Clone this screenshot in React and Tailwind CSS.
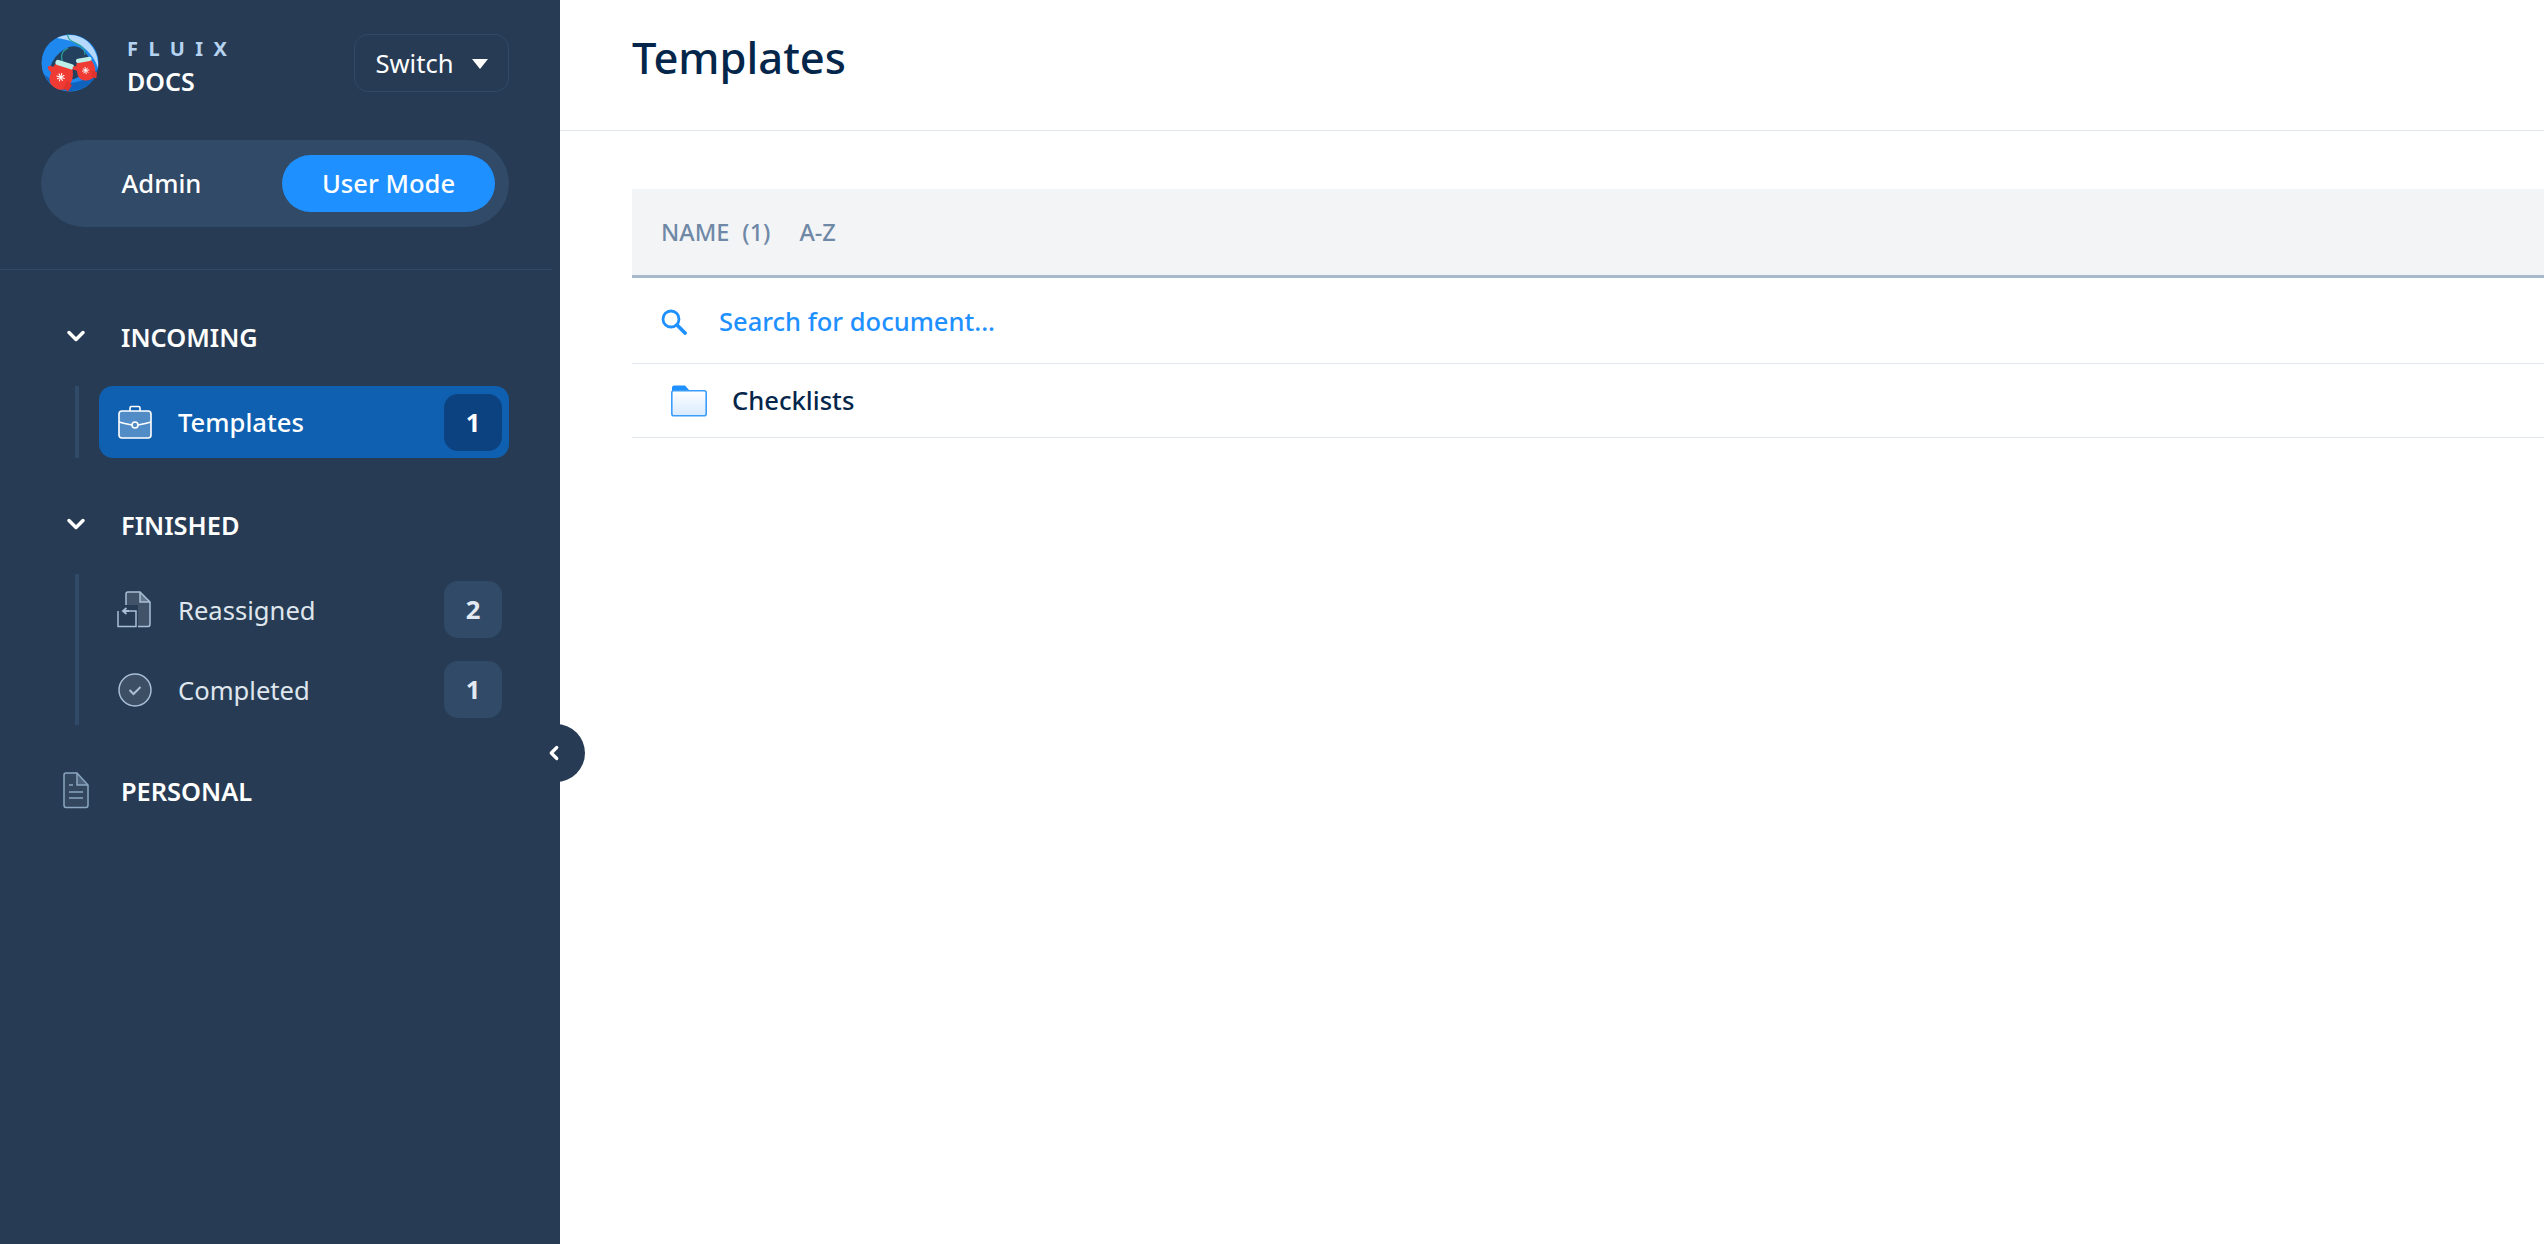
import React from 'react';
import { ChevronDown, ChevronLeft } from 'lucide-react';

const Mitten = ({ transform }) => (
  <g transform={transform}>
    <path d="M-10 -8 L10 -8 C13 -2 14 3 13 8 C12 15 8 19 1 19 C-7 19 -12 14 -12 7 L-12 3 L-16 1 C-19 -2 -16 -5 -12 -3 Z" fill="#ef3b33" />
    <path d="M8 6 L15 10 L13 18 L7 16 Z" fill="#e2322c" />
    <rect x="-11" y="-13" width="22" height="6" rx="3" fill="#bdeee8" />
    <g stroke="#fff" strokeWidth="1.2" strokeLinecap="round" transform="translate(0 5)">
      <path d="M-4.5 0 H4.5" />
      <path d="M0 -4.5 V4.5" />
      <path d="M-3 -3 L3 3" />
      <path d="M3 -3 L-3 3" />
    </g>
  </g>
);

const Logo = () => (
  <svg width="58" height="58" viewBox="0 0 58 58" className="shrink-0">
    <circle cx="29" cy="29" r="28.5" fill="#1e88ee" />
    <path d="M16 4 C24 0 36 -1 46 7 C54 14 58 24 57 34 C54 24 46 14 35 9 C28 6 22 5 16 4 Z" fill="#b5d8fb" />
    <path d="M3 40 C10 55 26 60 40 55 C50 51 55 44 57 34 C50 44 38 49 27 49 C17 49 9 46 3 40 Z" fill="#0f62bd" />
    <path d="M9 36 C10 26 18 17 28 13 C38 10 47 18 50 30 C44 40 36 46 26 46 C17 45 11 42 9 36 Z" fill="#24405f" />
    <path d="M27 0 C25 7 37 9 41 13 C43 15 44 17 44 21" fill="none" stroke="#2aa198" strokeWidth="1.2" />
    <path d="M27 14 C21 17 19 22 22 29" fill="none" stroke="#2aa198" strokeWidth="1.2" />
    <Mitten transform="translate(21 39) rotate(18) scale(0.88)" />
    <Mitten transform="translate(44 33) rotate(-10) scale(0.72)" />
  </svg>
);

const BriefcaseIcon = () => (
  <svg width="34" height="34" viewBox="0 0 34 34" fill="none" stroke="#fff" strokeWidth="1.6">
    <path d="M12 6 V3 C12 2 12.5 1.5 13.5 1.5 H20.5 C21.5 1.5 22 2 22 3 V6" />
    <rect x="1" y="6" width="32" height="27" rx="3" fill="#ffffff" fillOpacity="0.28" />
    <path d="M1 17 C7 19 11 19.5 14 20" />
    <path d="M33 17 C27 19 23 19.5 20 20" />
    <circle cx="17" cy="20" r="3" />
  </svg>
);

const ReassignedIcon = () => (
  <svg width="34" height="37" viewBox="0 0 34 37" fill="none" stroke="#a9bfd6" strokeWidth="1.5" className="-translate-x-[1px]">
    <path d="M9 14 V3 C9 2 10 1 11 1 H23 L33 11 V33 C33 34.5 32 35.5 31 35.5 H21 V14 Z" fill="#ffffff" fillOpacity="0.12" stroke="none" />
    <path d="M9 14 V3 C9 2 10 1 11 1 H23 L33 11 V33 C33 34.5 32 35.5 31 35.5 H21" />
    <path d="M23 1 V11 H33" fill="#a9bfd6" fillOpacity="0.35" />
    <path d="M1 20 V35.5 H19 V20 H8" />
    <path d="M12 20 H7 M9.5 17 L6 20 L9.5 23" strokeWidth="1.8" />
  </svg>
);

const CompletedIcon = () => (
  <svg width="34" height="34" viewBox="0 0 34 34" fill="none" stroke="#a9bfd6" strokeWidth="1.5">
    <circle cx="17" cy="17" r="16" fill="#ffffff" fillOpacity="0.1" />
    <path d="M11.5 17 L15.5 21 L22.5 14" strokeWidth="2" />
  </svg>
);

const PersonalIcon = () => (
  <svg width="26" height="37" viewBox="0 0 26 37" fill="none" stroke="#8ba6c1" strokeWidth="1.5" className="shrink-0">
    <path d="M3 1 H14 L25 13 V33 C25 34.5 24 35.5 23 35.5 H3 C2 35.5 1 34.5 1 33 V3 C1 2 2 1 3 1 Z" fill="#ffffff" fillOpacity="0.06" />
    <path d="M14 1 V13 H25" fill="#8ba6c1" fillOpacity="0.3" />
    <path d="M6 13 H10 M6 20 H20 M6 26 H20" />
  </svg>
);

const FolderIcon = () => (
  <svg width="36" height="32" viewBox="0 0 36 32">
    <defs>
      <linearGradient id="folderFill" x1="0" y1="0" x2="0" y2="1">
        <stop offset="0" stopColor="#ffffff" />
        <stop offset="1" stopColor="#d8eaff" />
      </linearGradient>
    </defs>
    <path d="M1 7 V2.5 C1 1.5 2 0.5 3 0.5 H14 L18 5 H34 V8 H1 Z" fill="#1e90ff" />
    <rect x="0.8" y="5.8" width="34.4" height="25" rx="2" fill="url(#folderFill)" stroke="#3b9dfb" strokeWidth="1.6" />
  </svg>
);

const SearchIcon = () => (
  <svg width="26" height="26" viewBox="0 0 26 26" fill="none" stroke="#1e90ff">
    <circle cx="10" cy="10" r="8" strokeWidth="2.8" />
    <path d="M16 16 L24 24" strokeWidth="3.8" strokeLinecap="round" />
  </svg>
);

const SectionHead = ({ label }) => (
  <div className="flex h-[40px] items-center">
    <ChevronDown className="ml-[62px] h-[28px] w-[28px] text-white" strokeWidth={3} />
    <span className="ml-[31px] pt-[2px] text-[25.4px] font-semibold text-white">{label}</span>
  </div>
);

const NavRow = ({ icon, label, count, active }) => (
  <div className={`flex items-center rounded-[14px] pl-[19px] pr-[7px] ${active ? 'h-[72px] bg-[#0f60b0]' : 'h-[57px]'}`}>
    <span className="flex w-[34px] items-center justify-center">{icon}</span>
    <span className={`ml-[26px] flex-1 pt-[2px] text-[25.6px] leading-none ${active ? 'font-medium text-white' : 'text-[#dfe6ee]'}`}>{label}</span>
    <span className={`flex h-[57px] w-[58px] items-center justify-center rounded-[14px] pt-[2px] text-[25.6px] font-bold ${active ? 'bg-[#0d4280] text-white' : 'bg-[#304a67] text-[#e3e9f0]'}`}>
      {count}
    </span>
  </div>
);

export default function App() {
  return (
    <div className="flex h-screen w-full overflow-hidden bg-white font-['Noto_Sans',sans-serif]">
      <aside className="relative w-[560px] shrink-0 bg-[#273c54]">
        <div className="flex items-start pl-[41px] pr-[51px] pt-[34px]">
          <Logo />
          <div className="ml-[28px] flex-1 pt-[2px]">
            <div className="text-[20px] font-bold leading-[26px] tracking-[0.52em] text-[#b5d3f0]">FLUIX</div>
            <div className="mt-[3px] text-[25px] font-semibold leading-[32px] text-white">DOCS</div>
          </div>
          <button className="flex h-[58px] w-[155px] items-center justify-center gap-[18px] rounded-[14px] border border-[#304a67] pt-[2px] text-[25.6px] text-white">
            Switch
            <span className="h-0 w-0 border-x-[8px] border-t-[10px] border-x-transparent border-t-white" />
          </button>
        </div>

        <div className="mx-[41px] mt-[43px] flex h-[87px] w-[468px] items-center rounded-full bg-[#304a67] pr-[14px]">
          <span className="flex-1 pt-[2px] text-center text-[25.6px] font-medium text-white">Admin</span>
          <span className="flex h-[57px] w-[213px] items-center justify-center rounded-full bg-[#1e90ff] pt-[2px] text-[25.6px] font-medium text-white">User Mode</span>
        </div>

        <div className="mr-[8px] mt-[42px] h-px bg-[#304a67]" />

        <div className="pt-[46px]">
          <SectionHead label="INCOMING" />
          <div className="ml-[75px] mr-[51px] mt-[30px] border-l-4 border-[#304a67] pl-[20px]">
            <NavRow icon={<BriefcaseIcon />} label="Templates" count="1" active />
          </div>

          <div className="mt-[46px]">
            <SectionHead label="FINISHED" />
          </div>
          <div className="ml-[75px] mr-[51px] mt-[30px] flex flex-col gap-[23px] border-l-4 border-[#304a67] py-[7px] pl-[20px]">
            <NavRow icon={<ReassignedIcon />} label="Reassigned" count="2" />
            <NavRow icon={<CompletedIcon />} label="Completed" count="1" />
          </div>

          <div className="mt-[45px] flex h-[40px] items-center pl-[63px]">
            <PersonalIcon />
            <span className="ml-[32px] pt-[2px] text-[25.4px] font-semibold text-white">PERSONAL</span>
          </div>
        </div>

        <div className="absolute left-[520px] top-[724px] flex h-[58px] w-[65px] items-center justify-center rounded-r-full bg-[#273c54] pl-[2px]">
          <ChevronLeft className="h-[22px] w-[22px] text-white" strokeWidth={3.5} />
        </div>
      </aside>

      <main className="min-w-0 flex-1">
        <div className="flex h-[131px] items-start border-b border-[#e2e8ee] pl-[72px] pt-[26px]">
          <h1 className="text-[43.5px] font-medium leading-[62px] text-[#04264a]">Templates</h1>
        </div>

        <div className="ml-[72px] mt-[58px]">
          <div className="flex h-[89px] items-center border-b-[3px] border-[#a9b9cd] bg-[#f3f4f6] pl-[29px] pt-[2px] text-[23.5px] font-medium text-[#6f88a6]">
            <span>NAME</span>
            <span className="ml-[13px]">(1)</span>
            <span className="ml-[29px]">A-Z</span>
          </div>
          <div className="flex h-[86px] items-center border-b border-[#e2e8ee] pl-[29px] pt-[2px]">
            <SearchIcon />
            <span className="ml-[32px] text-[25.5px] font-medium text-[#1e90ff]">Search for document...</span>
          </div>
          <div className="flex h-[74px] items-center border-b border-[#e2e8ee] pl-[39px] pt-[1px]">
            <FolderIcon />
            <span className="ml-[25px] text-[25.6px] font-medium text-[#04264a]">Checklists</span>
          </div>
        </div>
      </main>
    </div>
  );
}
